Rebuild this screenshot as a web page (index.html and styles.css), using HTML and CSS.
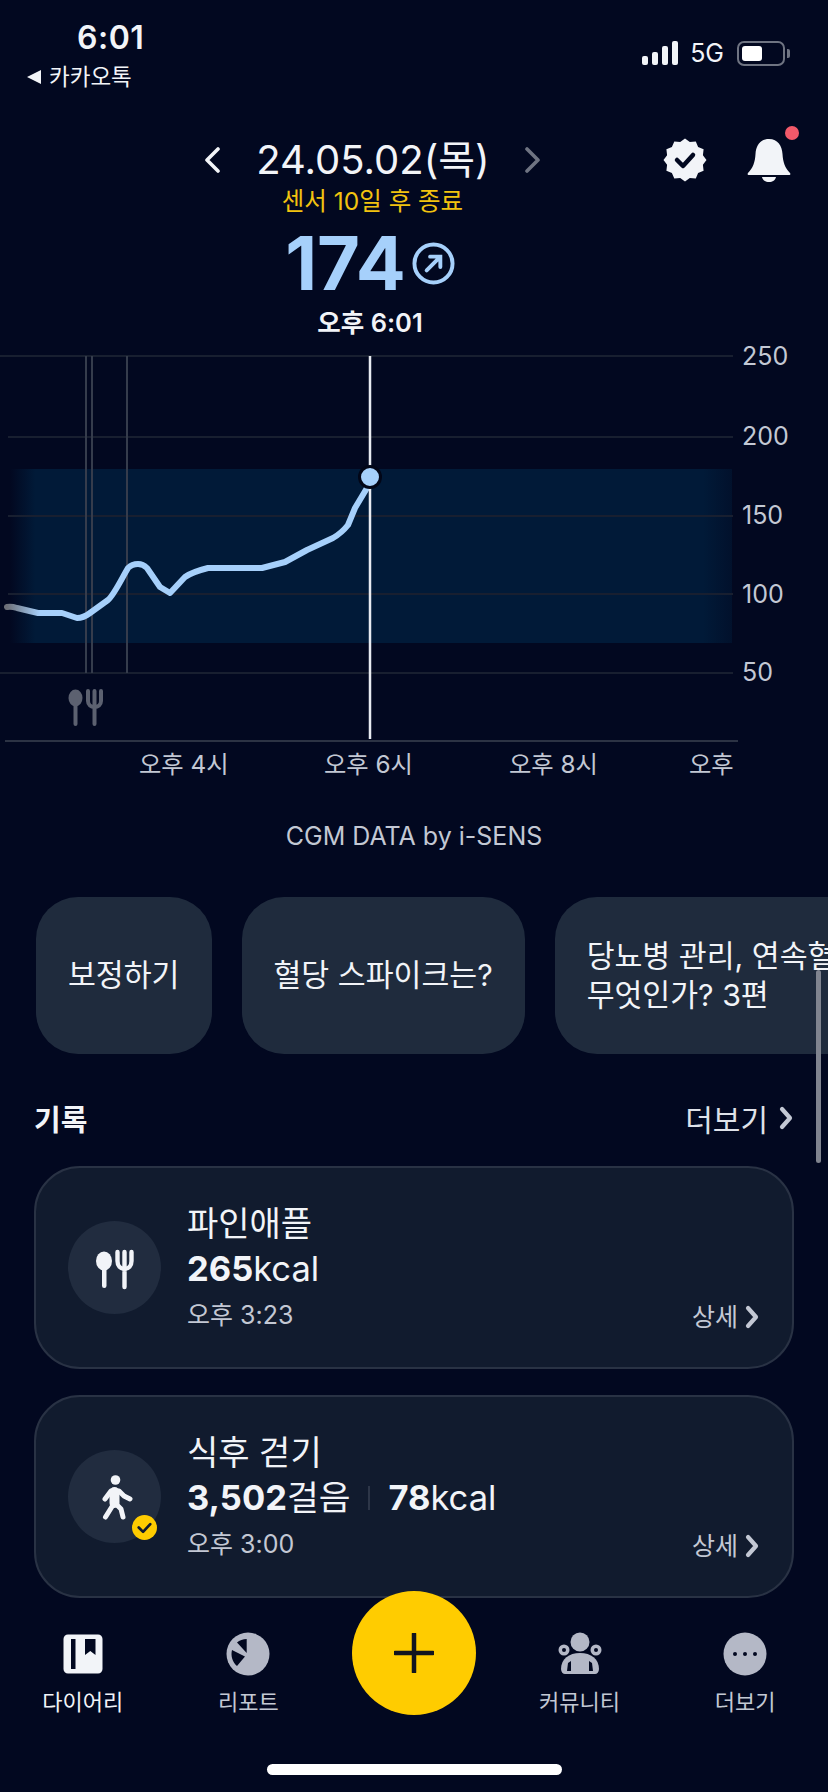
FILE: index.html
```html
<!DOCTYPE html>
<html lang="ko">
<head>
  <meta charset="UTF-8" />
  <meta name="viewport" content="width=device-width, initial-scale=1.0"/>
  <title>CGM Diary</title>
  <link rel="stylesheet" href="styles.css">
</head>
<body>
<div class="screen">

  <div class="status-bar">
    <div class="status-left">
      <div class="clock">6:01</div>
      <div class="back-app"><span class="back-tri"></span>카카오톡</div>
    </div>
    <div class="status-right">
      <div class="signal"><i></i><i></i><i></i><i></i></div>
      <span class="net">5G</span>
      <div class="battery"><div class="battery-fill"></div></div>
      <div class="battery-cap"></div>
    </div>
  </div>

  <header class="date-row">
    <div class="date-nav">
      <svg class="chev" viewBox="0 0 18 26"><path d="M15 2 4 13l11 11" /></svg>
      <span class="date">24.05.02(목)</span>
      <svg class="chev chev-off" viewBox="0 0 18 26"><path d="M3 2l11 11L3 24" /></svg>
    </div>
    <div class="date-actions">
      <svg class="badge-icon" viewBox="0 0 44 44">
        <polygon points="22,.5 26.8,4.1 32.8,3.4 35.1,8.9 40.6,11.3 39.9,17.2 43.5,22 39.9,26.8 40.6,32.8 35.1,35.1 32.8,40.6 26.8,39.9 22,43.5 17.2,39.9 11.3,40.6 8.9,35.1 3.4,32.8 4.1,26.8 .5,22 4.1,17.2 3.4,11.3 8.9,8.9 11.3,3.4 17.2,4.1" />
        <path class="badge-check" d="M14 22l6 6 10-11" />
      </svg>
      <div class="bell">
        <svg viewBox="0 0 44 44">
          <path d="M22 1C13 1 9 8 8.500 16 8 24 6 30 1 35c-.8 1-.3 2 1 2h40c1.300 0 1.800-1 1-2-5-5-7-11-7.500-19C35 8 31 1 22 1z" />
          <path d="M15 39h14c-.5 3-3.500 5-7 5s-6.500-2-7-5z" />
        </svg>
        <span class="bell-dot"></span>
      </div>
    </div>
  </header>

  <section class="hero">
    <div class="sensor">센서 10일 후 종료</div>
    <div class="reading">
      <span class="value">174</span>
      <svg class="trend" viewBox="0 0 44 44">
        <circle cx="22" cy="22" r="19.500" />
        <path d="M15 29 28 16M18.500 15H29v10.500" />
      </svg>
    </div>
    <div class="reading-time">오후 6:01</div>
  </section>

  <svg class="chart" viewBox="0 338 828 452" width="828" height="452">
    <defs>
      <linearGradient id="band" x1="0" x2="1" y1="0" y2="0">
        <stop offset="0" stop-color="#011a38" stop-opacity="0"/>
        <stop offset=".035" stop-color="#011a38"/>
        <stop offset=".96" stop-color="#011a38"/>
        <stop offset="1" stop-color="#011a38" stop-opacity=".5"/>
      </linearGradient>
      <linearGradient id="curve" gradientUnits="userSpaceOnUse" x1="7" x2="40" y1="0" y2="0">
        <stop offset="0" stop-color="#6d7078"/>
        <stop offset="1" stop-color="#a6d0fb"/>
      </linearGradient>
    </defs>
    <rect x="10" y="469" width="722" height="174" fill="url(#band)"/>
    <g class="grid">
      <path d="M0 356H733M8 437H733M8 516H733M8 594H733M0 673H733"/>
    </g>
    <path class="axis" d="M5 741H738"/>
    <path class="marker-lines" d="M86 356V673M92 356V673M127 356V673"/>
    <path class="curve" stroke="url(#curve)" d="M7 607C11 606 14 607 17 608L38 613H62L77 618C82 618 86 616 90 613L108 600C114 595 122 578 128 568C131 565 135 564 138 564C142 564 145 566 147 568L160 587L170 593L185 577C192 572 200 570 208 568H262L285 562L307 550L333 538C340 534 344 530 348 525L355 508L367 488"/>
    <path class="cursor" d="M370 356V739"/>
    <circle class="cursor-dot" cx="370" cy="477" r="10.500"/>
    <g class="meal-mark">
      <ellipse cx="75.500" cy="698" rx="7" ry="8.500"/>
      <rect x="73.500" y="700" width="4" height="26" rx="2"/>
      <path class="fork" d="M88 691v10c0 4 3 6 6.500 6s6.500-2 6.500-6v-10M94.500 691v33"/>
    </g>
    <g class="y-labels">
      <text x="742" y="365">250</text>
      <text x="742" y="445">200</text>
      <text x="742" y="524">150</text>
      <text x="742" y="603">100</text>
      <text x="742" y="681">50</text>
    </g>
    <g class="x-labels">
      <text x="139" y="773">오후 4시</text>
      <text x="324" y="773">오후 6시</text>
      <text x="509" y="773">오후 8시</text>
      <text x="689" y="773">오후</text>
    </g>
  </svg>

  <div class="credit">CGM DATA by i-SENS</div>

  <div class="chips">
    <div class="chip">보정하기</div>
    <div class="chip">혈당 스파이크는?</div>
    <div class="chip chip-long">당뇨병 관리, 연속혈당측정기란<br>무엇인가? 3편</div>
  </div>

  <div class="section-head">
    <h2>기록</h2>
    <div class="more">더보기<svg class="mini-chev" viewBox="0 0 14 24"><path d="M3 3l8 9-8 9"/></svg></div>
  </div>

  <div class="log-list">
    <article class="log-card">
      <div class="log-icon">
        <svg viewBox="0 0 93 93">
          <ellipse cx="36" cy="40" rx="8" ry="9.500"/>
          <rect x="34" y="43" width="4.500" height="24" rx="2.200"/>
          <path class="fork" d="M49.500 31v9c0 5 3 8 7 8s7-3 7-8v-9M56.500 31v35"/>
        </svg>
      </div>
      <div class="log-body">
        <div class="log-title">파인애플</div>
        <div class="log-stat"><b>265</b>kcal</div>
        <div class="log-time">오후 3:23</div>
      </div>
      <div class="log-detail">상세<svg class="mini-chev" viewBox="0 0 14 24"><path d="M3 3l8 9-8 9"/></svg></div>
    </article>

    <article class="log-card">
      <div class="log-icon">
        <svg viewBox="0 0 93 93">
          <circle cx="47.500" cy="30" r="4.800"/>
          <path class="walker-body" d="M46.500 42v11"/>
          <path class="walker" d="M37 49l6-8h8l5 5 6 3M45 55l-7.500 12M48 54l5 5 2 8"/>
        </svg>
        <span class="done-badge">
          <svg viewBox="0 0 26 26"><path d="M7 13l4.500 4.500L19 9.500"/></svg>
        </span>
      </div>
      <div class="log-body">
        <div class="log-title">식후 걷기</div>
        <div class="log-stat"><b>3,502</b>걸음<span class="stat-sep"></span><b>78</b>kcal</div>
        <div class="log-time">오후 3:00</div>
      </div>
      <div class="log-detail">상세<svg class="mini-chev" viewBox="0 0 14 24"><path d="M3 3l8 9-8 9"/></svg></div>
    </article>
  </div>

  <nav class="tab-bar">
    <a class="tab tab-on">
      <svg viewBox="0 0 44 44">
        <path d="M7 2.500h30c2.500 0 4.500 2 4.500 4.500v30c0 2.500-2 4.500-4.500 4.500H7c-2.500 0-4.500-2-4.500-4.500V7c0-2.500 2-4.500 4.500-4.500z"/>
        <path class="cut" d="M10 7h4.500v30H10zM24 7h10.500v16l-5.200-4-5.300 4z"/>
      </svg>
      <span>다이어리</span>
    </a>
    <a class="tab">
      <svg viewBox="0 0 44 44">
        <circle cx="22" cy="22" r="21.500"/>
        <path class="cut" d="M20.700 7v14L11 10.500c2.500-2 6-3.500 9.700-3.500zM6 18l13 6.500L11 34C6.500 30 4.500 24 6 18z"/>
      </svg>
      <span>리포트</span>
    </a>
    <div class="tab-gap"></div>
    <a class="tab">
      <svg viewBox="0 0 44 44">
        <circle cx="22" cy="10" r="9.500"/>
        <circle cx="6" cy="18" r="5.500"/>
        <circle cx="38" cy="18" r="5.500"/>
        <circle class="cut" cx="6" cy="18" r="2"/>
        <circle class="cut" cx="38" cy="18" r="2"/>
        <path d="M3 37c0-10 8-16 19-16s19 6 19 16c0 3-2 5-4 5H7c-2 0-4-2-4-5z"/>
        <path class="cut" d="M9 39l1-8 3-2v10zM35 39l-1-8-3-2v10z"/>
      </svg>
      <span>커뮤니티</span>
    </a>
    <a class="tab">
      <svg viewBox="0 0 44 44">
        <circle cx="22" cy="22" r="21.500"/>
        <circle class="cut" cx="12" cy="22" r="2"/>
        <circle class="cut" cx="22" cy="22" r="2"/>
        <circle class="cut" cx="32" cy="22" r="2"/>
      </svg>
      <span>더보기</span>
    </a>
  </nav>

  <button class="fab">
    <svg viewBox="0 0 40 40"><path d="M20 1v38M1 20h38"/></svg>
  </button>

  <div class="scroll-thumb"></div>
  <div class="home-bar"></div>
</div>
</body>
</html>
```

FILE: styles.css
```css
:root {
  --bg-color: #020820;
  --text-color: #f2f4f8;
  --muted-color: #c3c8d4;
  --accent-color: #ffcc00;
  --sky-color: #a6d0fb;
  --icon-gray: #b4b8c6;
  --card-color: #111b2e;
  --chip-color: #1f2b3d;
}

* {
  margin: 0;
  padding: 0;
  box-sizing: border-box;
}

body {
  background: var(--bg-color);
  color: var(--text-color);
  font-family: Inter, "Noto Sans CJK KR", sans-serif;
}

.screen {
  position: relative;
  width: 828px;
  height: 1792px;
  overflow: hidden;
}

/* status bar */
.status-bar {
  height: 138px;
  display: flex;
  justify-content: space-between;
  padding: 21px 38px 0 0;
}

.clock {
  margin-left: 77px;
  font-size: 32px;
  font-weight: 600;
  line-height: 34px;
  letter-spacing: 0.5px;
}

.back-app {
  display: flex;
  align-items: center;
  gap: 8px;
  margin: 6px 0 0 27px;
  font-size: 22.500px;
  line-height: 32px;
}

.back-tri {
  width: 0;
  height: 0;
  border-top: 7px solid transparent;
  border-bottom: 7px solid transparent;
  border-right: 14px solid var(--text-color);
}

.status-right {
  display: flex;
  align-items: center;
  height: 26px;
  margin-top: 19px;
}

.signal {
  display: flex;
  align-items: flex-end;
  gap: 4px;
  height: 24px;
  margin-right: 12px;
}

.signal i {
  display: block;
  width: 6px;
  border-radius: 2px;
  background: var(--text-color);
}

.signal i:nth-child(1) { height: 9px; }
.signal i:nth-child(2) { height: 13px; }
.signal i:nth-child(3) { height: 19px; }
.signal i:nth-child(4) { height: 24px; }

.net {
  font-size: 25px;
  margin-right: 13px;
}

.battery {
  width: 48px;
  height: 25px;
  padding: 3px;
  border: 2px solid #6f7482;
  border-radius: 7px;
}

.battery-fill {
  width: 20px;
  height: 100%;
  background: #fff;
  border-radius: 3px;
}

.battery-cap {
  width: 3px;
  height: 9px;
  margin-left: 2px;
  background: #6f7482;
  border-radius: 0 2px 2px 0;
}

/* date row */
.date-row {
  display: flex;
  align-items: center;
  justify-content: space-between;
  height: 44px;
  padding: 0 37px 0 203px;
}

.date-nav {
  display: flex;
  align-items: center;
}

.chev {
  width: 18px;
  height: 26px;
  fill: none;
  stroke: var(--text-color);
  stroke-width: 3.600;
  stroke-linecap: round;
  stroke-linejoin: round;
}

.chev-off {
  stroke: #6f7482;
}

.date {
  width: 303px;
  padding-left: 1px;
  text-align: center;
  font-size: 40px;
  font-weight: 400;
  line-height: 44px;
  white-space: nowrap;
}

.date-actions {
  display: flex;
  align-items: center;
  gap: 40px;
}

.badge-icon {
  width: 44px;
  height: 44px;
  fill: var(--text-color);
}

.badge-check {
  fill: none;
  stroke: var(--bg-color);
  stroke-width: 4.500;
  stroke-linecap: round;
  stroke-linejoin: round;
}

.bell {
  position: relative;
  width: 44px;
  height: 44px;
}

.bell svg {
  display: block;
  fill: var(--text-color);
}

.bell-dot {
  position: absolute;
  top: -12px;
  right: -8px;
  width: 14px;
  height: 14px;
  border-radius: 50%;
  background: #f2596a;
}

/* current reading */
.hero {
  width: 740px;
  text-align: center;
}

.sensor {
  margin-top: 4px;
  padding-left: 5px;
  font-size: 24.500px;
  line-height: 30px;
  color: #f2c30f;
}

.reading {
  display: flex;
  justify-content: center;
  align-items: center;
  gap: 6px;
  height: 70px;
  margin-top: 12px;
}

.value {
  font-size: 74px;
  font-weight: 700;
  line-height: 70px;
  color: var(--sky-color);
}

.trend {
  width: 43px;
  height: 43px;
  fill: none;
  stroke: var(--sky-color);
  stroke-width: 4;
}

.trend path {
  stroke-linecap: round;
}

.reading-time {
  margin-top: 10px;
  font-size: 25.500px;
  font-weight: 600;
  line-height: 30px;
}

/* chart */
.chart {
  display: block;
}

.grid path {
  stroke: #181f30;
  stroke-width: 2;
  fill: none;
}

.axis {
  stroke: #2c3344;
  stroke-width: 2;
}

.marker-lines {
  stroke: #353c4c;
  stroke-width: 2;
}

.curve {
  fill: none;
  stroke-width: 6;
  stroke-linecap: round;
  stroke-linejoin: round;
}

.cursor {
  stroke: #e8ebf1;
  stroke-width: 2.500;
}

.cursor-dot {
  fill: var(--sky-color);
  stroke: #020617;
  stroke-width: 3;
}

.meal-mark {
  fill: #5c6170;
}

.meal-mark .fork {
  fill: none;
  stroke: #5c6170;
  stroke-width: 4;
  stroke-linecap: round;
}

.y-labels text {
  font-size: 25px;
  fill: var(--muted-color);
}

.x-labels text {
  font-size: 24.300px;
  fill: var(--muted-color);
}

.credit {
  margin-top: 28px;
  height: 36px;
  font-size: 25px;
  line-height: 36px;
  text-align: center;
  color: var(--muted-color);
}

/* quick chips */
.chips {
  display: flex;
  gap: 30px;
  margin-top: 43px;
  padding-left: 36px;
  width: 1400px;
}

.chip {
  display: flex;
  align-items: center;
  height: 157px;
  padding: 0 32px;
  border-radius: 42px;
  background: var(--chip-color);
  font-size: 30.300px;
  line-height: 39px;
  white-space: nowrap;
}

.chip-long {
  display: block;
  padding: 40px 32px 0;
}

.section-head {
  display: flex;
  align-items: center;
  justify-content: space-between;
  height: 40px;
  margin-top: 44px;
  padding: 0 35px 0 34px;
}

.section-head h2 {
  font-size: 29px;
  font-weight: 700;
}

.more {
  display: flex;
  align-items: center;
  gap: 11px;
  font-size: 30px;
  color: #dfe2e9;
}

.mini-chev {
  width: 14px;
  height: 24px;
  fill: none;
  stroke: var(--muted-color);
  stroke-width: 4.200;
  stroke-linecap: round;
  stroke-linejoin: round;
}

/* records */
.log-list {
  display: flex;
  flex-direction: column;
  gap: 26px;
  margin-top: 28px;
  padding: 0 34px;
}

.log-card {
  position: relative;
  display: flex;
  align-items: center;
  gap: 26px;
  height: 203px;
  padding: 0 33px 0 32px;
  border: 2px solid #293244;
  border-radius: 46px;
  background: var(--card-color);
}

.log-icon {
  position: relative;
  flex: none;
  width: 93px;
  height: 93px;
  border-radius: 50%;
  background: #212c3f;
}

.log-icon svg {
  display: block;
  fill: var(--text-color);
}

.log-icon .fork,
.walker,
.walker-body {
  fill: none;
  stroke: var(--text-color);
  stroke-linecap: round;
  stroke-linejoin: round;
}

.log-icon .fork {
  stroke-width: 4.400;
}

.walker {
  stroke-width: 5;
}

.walker-body {
  stroke-width: 10;
}

.done-badge {
  position: absolute;
  right: 4px;
  bottom: 3px;
  width: 25px;
  height: 25px;
  border-radius: 50%;
  background: var(--accent-color);
}

.log-icon .done-badge svg {
  fill: none;
  stroke: #111b2e;
  stroke-width: 2.800;
  stroke-linecap: round;
  stroke-linejoin: round;
}

.log-body {
  flex: 1;
  margin-top: -4px;
}

.log-title {
  font-size: 34px;
  line-height: 46px;
}

.log-stat {
  display: flex;
  align-items: center;
  font-size: 34.500px;
  line-height: 44px;
}

.log-stat b {
  font-weight: 700;
}

.stat-sep {
  width: 2px;
  height: 24px;
  margin: 0 18px 0 18px;
  background: #2d3648;
}

.log-time {
  margin-top: 8px;
  font-size: 25px;
  line-height: 32px;
  color: var(--muted-color);
}

.log-detail {
  display: flex;
  align-items: center;
  gap: 7px;
  align-self: flex-end;
  margin-bottom: 34px;
  font-size: 25px;
  line-height: 32px;
  color: var(--muted-color);
}

/* tab bar */
.tab-bar {
  display: grid;
  grid-template-columns: repeat(5, 1fr);
  margin-top: 34px;
}

.tab {
  display: flex;
  flex-direction: column;
  align-items: center;
  gap: 10px;
  font-size: 22px;
  line-height: 32px;
  color: var(--muted-color);
}

.tab svg {
  display: block;
  width: 44px;
  height: 44px;
  fill: var(--icon-gray);
}

.tab-on {
  color: var(--text-color);
}

.tab-on svg {
  fill: var(--text-color);
}

.tab svg .cut {
  fill: var(--bg-color);
}

.fab {
  position: absolute;
  left: 352px;
  top: 1591px;
  display: flex;
  align-items: center;
  justify-content: center;
  width: 124px;
  height: 124px;
  border: none;
  border-radius: 50%;
  background: var(--accent-color);
}

.fab svg {
  width: 40px;
  height: 40px;
  fill: none;
  stroke: #12151f;
  stroke-width: 4.500;
  stroke-linecap: round;
}

.scroll-thumb {
  position: absolute;
  left: 816px;
  top: 970px;
  width: 5px;
  height: 193px;
  border-radius: 3px;
  background: #80848f;
}

.home-bar {
  position: absolute;
  left: 267px;
  top: 1764px;
  width: 295px;
  height: 11px;
  border-radius: 6px;
  background: #fff;
}
```
